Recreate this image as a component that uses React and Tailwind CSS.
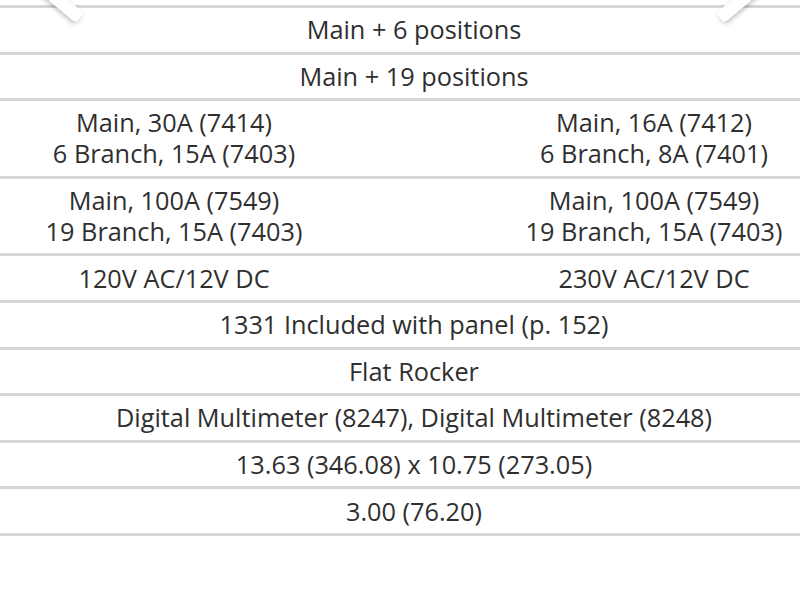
const rows = [
  { full: "Main + 6 positions" },
  { full: "Main + 19 positions" },
  {
    left: ["Main, 30A (7414)", "6 Branch, 15A (7403)"],
    right: ["Main, 16A (7412)", "6 Branch, 8A (7401)"],
  },
  {
    left: ["Main, 100A (7549)", "19 Branch, 15A (7403)"],
    right: ["Main, 100A (7549)", "19 Branch, 15A (7403)"],
  },
  { left: ["120V AC/12V DC"], right: ["230V AC/12V DC"] },
  { full: "1331 Included with panel (p. 152)" },
  { full: "Flat Rocker" },
  { full: "Digital Multimeter (8247), Digital Multimeter (8248)" },
  { full: "13.63 (346.08) x 10.75 (273.05)" },
  { full: "3.00 (76.20)" },
];

function Cell({ lines }) {
  return (
    <div className="flex-1 text-center py-[6.3px]">
      {lines.map((l) => (
        <div key={l}>{l}</div>
      ))}
    </div>
  );
}

export default function App() {
  return (
    <div
      className="relative w-[800px] h-[600px] overflow-hidden bg-white text-[#2f2f2f] text-[25.3px] leading-[31px]"
      style={{ fontFamily: '"Open Sans", sans-serif' }}
    >
      <div className="w-[960px] ml-[-66px]">
        <div className="h-[8px] border-b-[3px] border-[#d6d6d6]" />
        {rows.map((r, i) => (
          <div key={i} className="flex border-b-[3px] border-[#d6d6d6]">
            {r.full ? (
              <Cell lines={[r.full]} />
            ) : (
              <>
                <Cell lines={r.left} />
                <Cell lines={r.right} />
              </>
            )}
          </div>
        ))}
      </div>

      {/* carousel arrow edges peeking in from above */}
      <div className="absolute left-[34px] top-[-5px] w-[52px] h-[13px] bg-white rounded-sm rotate-[40deg] shadow-[0_2px_4px_rgba(0,0,0,0.25)]" />
      <div className="absolute left-[714px] top-[-5px] w-[52px] h-[13px] bg-white rounded-sm rotate-[-40deg] shadow-[0_2px_4px_rgba(0,0,0,0.25)]" />
    </div>
  );
}
